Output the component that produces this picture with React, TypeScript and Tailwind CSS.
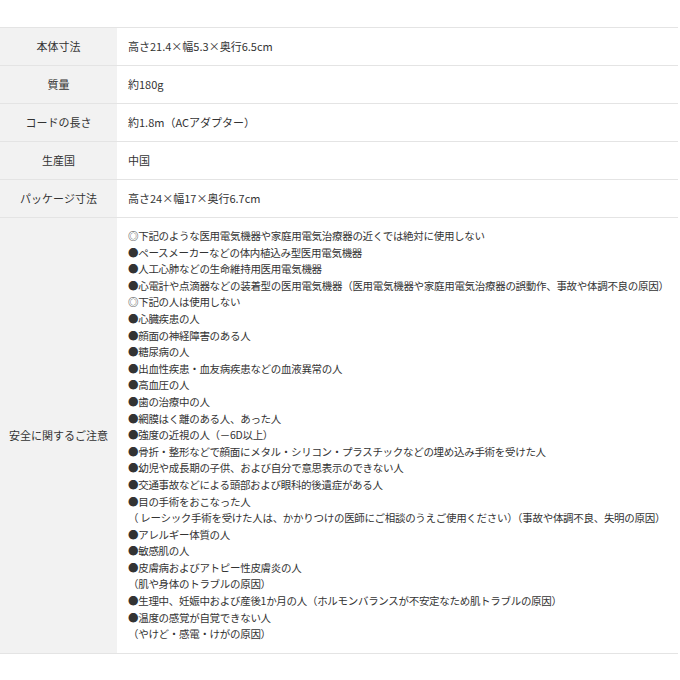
const specs = [
  { label: "本体寸法", value: "高さ21.4×幅5.3×奥行6.5cm" },
  { label: "質量", value: "約180g" },
  { label: "コードの長さ", value: "約1.8m（ACアダプター）" },
  { label: "生産国", value: "中国" },
  { label: "パッケージ寸法", value: "高さ24×幅17×奥行6.7cm" },
]

const cautions = [
  "◎下記のような医用電気機器や家庭用電気治療器の近くでは絶対に使用しない",
  "●ペースメーカーなどの体内植込み型医用電気機器",
  "●人工心肺などの生命維持用医用電気機器",
  "●心電計や点滴器などの装着型の医用電気機器（医用電気機器や家庭用電気治療器の誤動作、事故や体調不良の原因）",
  "◎下記の人は使用しない",
  "●心臓疾患の人",
  "●顔面の神経障害のある人",
  "●糖尿病の人",
  "●出血性疾患・血友病疾患などの血液異常の人",
  "●高血圧の人",
  "●歯の治療中の人",
  "●網膜はく離のある人、あった人",
  "●強度の近視の人（－6D以上）",
  "●骨折・整形などで顔面にメタル・シリコン・プラスチックなどの埋め込み手術を受けた人",
  "●幼児や成長期の子供、および自分で意思表示のできない人",
  "●交通事故などによる頭部および眼科的後遺症がある人",
  "●目の手術をおこなった人",
  "（ レーシック手術を受けた人は、かかりつけの医師にご相談のうえご使用ください）（事故や体調不良、失明の原因）",
  "●アレルギー体質の人",
  "●敏感肌の人",
  "●皮膚病およびアトピー性皮膚炎の人",
  "（肌や身体のトラブルの原因）",
  "●生理中、妊娠中および産後1か月の人（ホルモンバランスが不安定なため肌トラブルの原因）",
  "●温度の感覚が自覚できない人",
  "（やけど・感電・けがの原因）",
]

export default function App() {
  return (
    <div
      className="w-[680px] h-[680px] bg-white pt-[27px] text-[#333]"
      style={{ fontFamily: '"Noto Sans CJK JP", "Noto Sans", sans-serif' }}
    >
      <div className="w-[678px] border-t border-b border-[#e4e4e4]">
        {specs.map((s) => (
          <div key={s.label} className="flex h-[38px] border-b border-[#e4e4e4]">
            <div className="w-[117px] shrink-0 bg-[#f2f2f2] flex items-center justify-center text-[11px]">
              {s.label}
            </div>
            <div className="flex-1 flex items-center pl-[11px] text-[11px]">{s.value}</div>
          </div>
        ))}
        <div className="flex">
          <div className="w-[117px] shrink-0 bg-[#f2f2f2] flex items-center justify-center text-[11px]">
            安全に関するご注意
          </div>
          <div className="flex-1 pl-[11px] pt-[10px] pb-[10px] text-[10.5px] leading-[16.6px] tracking-[-0.3px]">
            {cautions.map((c, i) => (
              <div key={i} className="whitespace-nowrap">
                {c}
              </div>
            ))}
          </div>
        </div>
      </div>
    </div>
  )
}
